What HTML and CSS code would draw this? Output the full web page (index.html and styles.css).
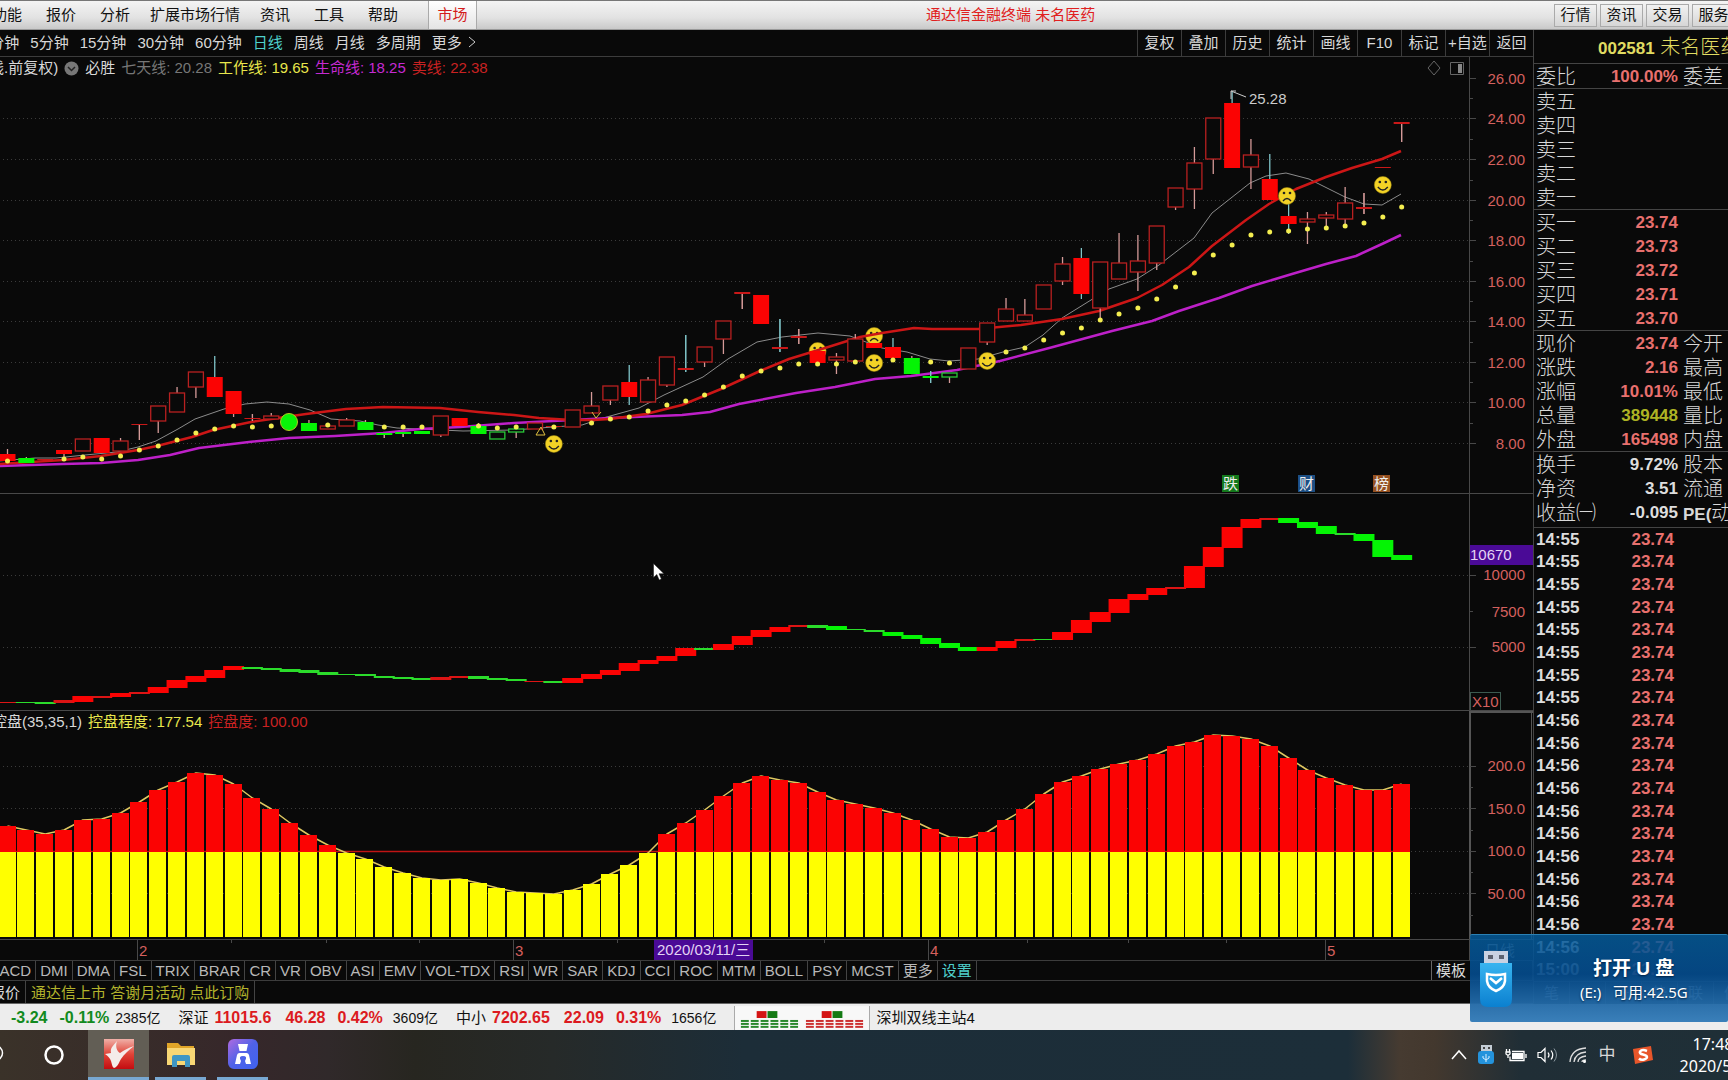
FILE: index.html
```html
<!DOCTYPE html>
<html lang="zh-CN">
<head>
<meta charset="utf-8">
<title>通达信金融终端 未名医药</title>
<meta name="viewport" content="width=device-width, initial-scale=1">
<link rel="stylesheet" href="styles.css">
</head>
<body>
<header class="menubar">
  <nav class="menu">
    <button>功能</button><button>报价</button><button>分析</button><button class="wide">扩展市场行情</button><button>资讯</button><button>工具</button><button>帮助</button>
  </nav>
  <button class="market">市场</button>
  <h1 class="title">通达信金融终端 未名医药</h1>
  <nav class="quick"><button>行情</button><button>资讯</button><button>交易</button><button>服务</button></nav>
</header>

<main class="workspace">
  <section class="analysis">
    <div class="toolbar">
      <nav class="periods">
        <button>1分钟</button><button>5分钟</button><button>15分钟</button><button>30分钟</button><button>60分钟</button><button class="on">日线</button><button>周线</button><button>月线</button><button>多周期</button><button>更多<svg width="8" height="12" viewBox="0 0 8 12"><path d="M1 1l6 5-6 5" fill="none" stroke="#ccc"/></svg></button>
      </nav>
      <nav class="tools">
        <button>复权</button><button>叠加</button><button>历史</button><button>统计</button><button>画线</button><button>F10</button><button>标记</button><button>+自选</button><button>返回</button>
      </nav>
    </div>
    <div class="panels">
      <div class="panel">
        <svg id="price" viewBox="0 57 1534 437" preserveAspectRatio="xMaxYMid slice"></svg>
        <div class="legend first">
          <span>(日线.前复权)</span>
          <svg width="15" height="15" viewBox="0 0 15 15"><circle cx="7.500" cy="7.500" r="7" fill="#777"/><path d="M4 6l3.500 3.500L11 6" fill="none" stroke="#222" stroke-width="1.500"/></svg>
          <span>必胜</span>
          <span class="gray">七天线: 20.28</span><span class="yellow">工作线: 19.65</span><span class="violet">生命线: 18.25</span><span class="red">卖线: 22.38</span>
        </div>
      </div>
      <div class="panel"><svg id="volume" viewBox="0 494 1534 217" preserveAspectRatio="xMaxYMid slice"></svg></div>
      <div class="panel">
        <svg id="control" viewBox="0 711 1534 229" preserveAspectRatio="xMaxYMid slice"></svg>
        <div class="legend third">
          <span>控盘(35,35,1)</span><span class="yellow">控盘程度: 177.54</span><span class="red">控盘度: 100.00</span>
        </div>
      </div>
      <div class="panel"><svg id="dates" viewBox="0 940 1534 20" preserveAspectRatio="xMaxYMid slice"></svg></div>
    </div>
    <nav class="indicators">
      <button>MACD</button><button>DMI</button><button>DMA</button><button>FSL</button><button>TRIX</button><button>BRAR</button><button>CR</button><button>VR</button><button>OBV</button><button>ASI</button><button>EMV</button><button>VOL-TDX</button><button>RSI</button><button>WR</button><button>SAR</button><button>KDJ</button><button>CCI</button><button>ROC</button><button>MTM</button><button>BOLL</button><button>PSY</button><button>MCST</button><button>更多</button><button class="on">设置</button><button class="template">模板</button>
    </nav>
    <div class="news"><button>报价</button><a href="#">通达信上市 答谢月活动 点此订购</a></div>
  </section>

  <aside class="quote">
    <h2><b>002581</b> 未名医药</h2>
    <table><tbody><tr><th>委比</th><td>100.00%</td><th>委差</th></tr></tbody></table>
    <table><tbody>
      <tr><th>卖五</th><td></td><th></th></tr><tr><th>卖四</th><td></td><th></th></tr><tr><th>卖三</th><td></td><th></th></tr><tr><th>卖二</th><td></td><th></th></tr><tr><th>卖一</th><td></td><th></th></tr>
    </tbody></table>
    <table><tbody>
      <tr><th>买一</th><td>23.74</td><th></th></tr><tr><th>买二</th><td>23.73</td><th></th></tr><tr><th>买三</th><td>23.72</td><th></th></tr><tr><th>买四</th><td>23.71</td><th></th></tr><tr><th>买五</th><td>23.70</td><th></th></tr>
    </tbody></table>
    <table><tbody>
      <tr><th>现价</th><td>23.74</td><th>今开</th></tr><tr><th>涨跌</th><td>2.16</td><th>最高</th></tr><tr><th>涨幅</th><td>10.01%</td><th>最低</th></tr><tr><th>总量</th><td class="vol">389448</td><th>量比</th></tr><tr><th>外盘</th><td>165498</td><th>内盘</th></tr>
    </tbody></table>
    <table class="plain"><tbody>
      <tr><th>换手</th><td>9.72%</td><th>股本</th></tr><tr><th>净资</th><td>3.51</td><th>流通</th></tr><tr><th>收益㈠</th><td>-0.095</td><th><b>PE(</b>动)</th></tr>
    </tbody></table>
    <table class="ticks"><tbody id="ticks"></tbody></table>
    <nav class="quote-tabs"><button>笔</button><button>价</button><button>细</button><button>势</button><button>联</button><button>值</button></nav>
  </aside>
</main>

<footer class="status">
  <span class="index"><b class="down">-3.24</b><b class="down">-0.11%</b><span>2385亿</span></span>
  <span class="index"><span class="label">深证</span><b>11015.6</b><b>46.28</b><b>0.42%</b><span>3609亿</span></span>
  <span class="index"><span class="label">中小</span><b>7202.65</b><b>22.09</b><b>0.31%</b><span>1656亿</span></span>
  <svg class="lights" width="136" height="24" viewBox="0 0 136 24" id="lights"></svg>
  <span class="server">深圳双线主站4</span>
</footer>

<div class="taskbar">
  <button class="search" aria-label="搜索"><svg width="18" height="24" viewBox="0 0 18 24"><circle cx="9" cy="10" r="7.500" fill="none" stroke="#fff" stroke-width="1.500"/></svg></button>
  <button class="cortana" aria-label="Cortana"><svg width="22" height="22" viewBox="0 0 22 22"><circle cx="11" cy="11" r="8.500" fill="none" stroke="#fff" stroke-width="2.500"/></svg></button>
  <button class="app active" aria-label="通达信">
    <svg width="30" height="30" viewBox="0 0 30 30"><defs><linearGradient id="tdx" x2="0" y2="1"><stop offset="0" stop-color="#f0b0a8"/><stop offset=".5" stop-color="#e04438"/><stop offset="1" stop-color="#c40c10"/></linearGradient></defs><path fill="url(#tdx)" d="M0 0h30v30H0z"/><path fill="#f4ecea" d="M13 2C9 7 6 9 7 14L1 15c3 2 5 4 6 7 1 3 1 6 3 7 4-1 5-6 7-9 3-5 8-9 13-13-6 2-10 4-14 7-3-2-5-6-3-12z"/></svg>
  </button>
  <button class="app" aria-label="文件资源管理器">
    <svg width="30" height="28" viewBox="0 0 30 28"><path fill="#e0a528" d="M1 3h11l3 3h13v18H1z"/><path fill="#f8d775" d="M1 8h28v17H1z"/><path fill="#3f96c4" d="M6 27V17q0-2 2-2h14q2 0 2 2v10h-5v-6h-8v6z"/></svg>
  </button>
  <button class="app" aria-label="应用">
    <svg width="30" height="30" viewBox="0 0 30 30"><defs><linearGradient id="pur" x1="0" y1="0" x2="1" y2="1"><stop offset="0" stop-color="#b06ae0"/><stop offset=".5" stop-color="#4f62e8"/><stop offset="1" stop-color="#3f63f0"/></linearGradient></defs><rect width="30" height="30" rx="6" fill="url(#pur)"/><path fill="#fff" d="M10 5h10l-1.500 7h-7zM7 25l2-9q.5-2 2.500-2h7q2 0 2.500 2l2 9h-5l-1-3q3-5-2-5t-2 5l-1 3z"/></svg>
  </button>
  <div class="tray">
    <svg width="16" height="12" viewBox="0 0 16 12"><path d="M1 10l7-8 7 8" fill="none" stroke="#fff" stroke-width="1.500"/></svg>
    <svg width="18" height="22" viewBox="0 0 18 22"><path fill="#c4ccd4" d="M4 1h11v7H4z"/><path fill="#444" d="M6 3h2v2H6zm5 0h2v2h-2z"/><rect y="7" x="1" width="16" height="13" rx="3" fill="#2493dc"/><path d="M9 10v8M6 12v2l3 2 3-2v-2" fill="none" stroke="#d8efff"/></svg>
    <svg width="22" height="16" viewBox="0 0 22 16"><path fill="none" stroke="#fff" stroke-width="1.300" d="M7 4.500h12v9H5v-4M21 7v4M1.500 2v3M4.500 2v3M1 5h4v2l-2 1.500L1 7zM3 8v3"/><path fill="#fff" d="M7 6h11v6H7z"/></svg>
    <svg width="22" height="16" viewBox="0 0 22 16"><path fill="none" stroke="#fff" stroke-width="1.200" d="M1 5.500h3l4-4v13l-4-4H1zM11 5.500q2 2.500 0 5M14 3.500q3.500 4.500 0 9"/><path fill="none" stroke="#8a979e" d="M17 1.500q5 6.500 0 13"/></svg>
    <svg width="18" height="18" viewBox="0 0 18 18"><g fill="none" stroke="#ddd" stroke-width="1.300"><path d="M1 16Q2 3 17 2M5 16q1-9 12-10M9 16q0-5 8-6M13 16q0-2 4-2"/></g><circle cx="15.500" cy="15.500" r="1.500" fill="#fff"/></svg>
    <span class="ime">中</span>
    <svg width="22" height="20" viewBox="0 0 22 20"><path fill="#e8562a" d="M1 4l18-3 2 14-18 4z"/><path d="M15 6Q10 4 8 6.500q-1 2 3 3t4 2.500-3 2.500-5-1" fill="none" stroke="#fff" stroke-width="2.500"/></svg>
    <div class="clock"><time>17:48</time><time>2020/5/8</time></div>
  </div>
</div>

<div class="popup" role="status">
  <svg width="34" height="56" viewBox="0 0 34 56"><defs><linearGradient id="usb" x2="0" y2="1"><stop offset="0" stop-color="#38b4f0"/><stop offset="1" stop-color="#0b80d0"/></linearGradient></defs><path fill="#c9d2e2" d="M5 0h24v14H5z"/><path fill="#5c6270" d="M9 4h5v4H9zm11 0h5v4h-5z"/><path fill="url(#usb)" d="M1 12h32v36q0 8-8 8H9q-8 0-8-8z"/><path d="M8 23q9 2 18 0v7q-1 7-9 10-8-3-9-10zM11 27l6 5 6-5" fill="none" stroke="#fff" stroke-width="2.500"/></svg>
  <p><strong>打开 U 盘</strong><span>(E:)&nbsp;&nbsp; 可用:42.5G</span></p>
</div>
<svg class="cursor" width="12" height="18" viewBox="0 0 12 18"><path fill="#fff" stroke="#111" stroke-width=".5" d="M.5.500v14l3.300-3 2.400 5.500 2.200-1-2.400-5.300H11z"/></svg>
<script src="chart.js"></script>
</body>
</html>
```
FILE: styles.css
```css
* { box-sizing: border-box; }
body {
  margin: 0; min-height: 100vh; overflow: hidden; display: flex; flex-direction: column;
  background: #090909; color: #d8d8d8;
  font: 15px/20px "Liberation Sans", "Noto Sans CJK SC", sans-serif;
}
button { background: none; border: 0; padding: 0; color: inherit; font: inherit; white-space: nowrap; flex: none; }
h1, h2, p { margin: 0; font-size: inherit; font-weight: 400; }
svg { flex: none; }

/* Menu bar */
.menubar { flex: none; height: 30px; display: flex; align-items: center; color: #111; overflow: hidden;
  background: linear-gradient(#f4f4f4, #e2e2e2 60%, #c9c9c9); border-top: 1px solid #777; border-bottom: 1px solid #999; }
.menu { display: flex; margin-left: -20px; }
.menu button { padding: 0 12px; }
.menu .wide { padding: 0 8px; }
.market { margin-left: 18px; width: 49px; height: 28px; color: #d41c1c; background: linear-gradient(#fff, #e4e4e4); border: solid #aaa; border-width: 0 1px; }
.title { flex: 1; padding-right: 10px; text-align: center; color: #e02020; }
.quick { display: flex; gap: 3px; margin-right: -7px; }
.quick button { width: 43px; height: 23px; border: 1px solid #aaa; background: linear-gradient(#f2f2f2, #d6d6d6); }

/* Workspace */
.workspace { flex: 1; min-height: 0; display: grid; grid-template-columns: minmax(0, 1fr) 194px; }
.analysis { display: flex; flex-direction: column; min-width: 0; border-right: 1px solid #444; overflow: hidden; }
.toolbar { flex: none; height: 27px; display: flex; justify-content: space-between; border-bottom: 1px solid #3c3c3c; }
.periods { display: flex; gap: 11px; margin-left: -19px; }
.periods svg { margin-left: 6px; }
.on { color: #4fd0cc; }
.tools { display: flex; }
.tools button { width: 44px; border-left: 1px solid #3c3c3c; }
.panels { flex: 1; min-height: 0; display: grid; grid-template-rows: minmax(0, 437fr) minmax(0, 217fr) minmax(0, 229fr) minmax(0, 20fr); }
.panel { display: grid; grid-template: minmax(0, 1fr) / minmax(0, 1fr); min-height: 0; overflow: hidden; }
.panel > * { grid-area: 1 / 1; }
.panel > svg { width: 100%; height: 100%; }
.panel text { font-size: 15px; }
.legend { align-self: start; display: flex; gap: 6px; padding-top: 1px; white-space: nowrap; }
.legend.first { margin-left: -31px; align-items: center; }
.legend.third { margin-left: -8px; }
.gray { color: #777; }
.yellow { color: #e8e64c; }
.violet { color: #c52ad2; }
.red { color: #c92222; }

.indicators { flex: none; height: 21px; display: flex; margin-left: -17px; border: solid #3c3c3c; border-width: 1px 0; color: #b8b8b8; }
.indicators button { padding: 0 4px; border-right: 1px solid #444; line-height: 19px; }
.indicators .template { margin-left: auto; width: 102px; text-align: left; border-left: 1px solid #666; color: #ddd; }
.news { flex: none; height: 23px; display: flex; margin-left: -10px; border-bottom: 1px solid #666; line-height: 24px; }
.news button { padding-right: 5px; border-right: 1px solid #444; }
.news a { padding: 0 5px; border-right: 1px solid #444; color: #b3b32c; text-decoration: none; }

/* Quote panel */
.quote { display: flex; flex-direction: column; min-width: 0; min-height: 0; overflow: hidden; }
.quote h2 { height: 34px; padding-left: 64px; font-size: 20px; line-height: 34px; font-weight: 300; color: #e0dc62; white-space: nowrap; border-bottom: 1px solid #444; }
.quote h2 b { font-size: 17px; font-weight: 700; }
.quote table { flex: none; table-layout: fixed; width: 210px; border-collapse: collapse; border-bottom: 1px solid #444; }
.quote tr { height: 24px; }
.quote th, .quote td { padding: 2px 0 0; line-height: 22px; white-space: nowrap; vertical-align: top; }
.quote th { font-size: 20px; font-weight: 300; text-align: left; padding-left: 2px; }
.quote th:last-child { padding-left: 5px; }
.quote th:first-child { width: 64px; }
.quote td { width: 80px; font-size: 17px; font-weight: 700; text-align: right; color: #e8706e; }
.quote th b { font-size: 17px; font-weight: 700; }
.quote td.vol { color: #aeb324; }
.quote .plain td { color: #ddd; }
.quote .plain tr:last-child { height: 27px; }
.quote .ticks { flex: 1; display: flex; min-height: 0; border: 0; }
.ticks tbody { flex: 1; display: grid; grid-auto-rows: minmax(0, 1fr); }
.quote .ticks tr { height: auto; display: grid; grid-template-columns: 64px 76px; }
.quote .ticks td { width: auto; line-height: 20px; }
.quote .ticks td:first-child { text-align: left; padding-left: 2px; color: #ddd; }
.quote-tabs { flex: none; height: 23px; display: flex; border-top: 1px solid #444; width: 220px; }
.quote-tabs button { width: 36px; border-right: 1px solid #444; }

/* Index strip */
.status { flex: none; height: 26px; display: flex; align-items: center; background: #ededed; color: #111; font-size: 14px; line-height: 24px; white-space: nowrap; padding: 2px 0 0 11px; }
.index { display: flex; align-items: center; margin-right: 18px; }
.index b { font-size: 16px; color: #dc1a20; margin-right: 12px; }
.index b:nth-of-type(1) { margin-right: 14px; }
.index b.down { color: #128a20; }
.index b.down:nth-of-type(1) { margin-right: 12px; }
.index b + span { margin-left: -2px; }
.index .down + span { margin-left: -6px; }
.label { font-size: 15px; margin-right: 6px; }
.lights { border: solid #aaa; border-width: 0 1px; margin-right: 6px; }
.server { font-size: 15px; }

/* Taskbar */
.taskbar { flex: none; height: 50px; display: flex; overflow: hidden;
  background: linear-gradient(90deg, #3a3229, #36272a 14%, #30292a 19%, #272620 24%, #262a29 32%, #1c2d38 43%, #1c2e39 78%, #463b31 81%, #43382e 83%, #202e36 88%, #1f2f37); }
.taskbar button { display: flex; align-items: center; justify-content: center; }
.search { width: 18px; margin-left: -14px; }
.cortana { width: 60px; margin-left: 20px; }
.app { width: 51px; margin-right: 11px; border-bottom: 3px solid #78a8d2; }
.app.active { width: 61px; margin: 0 6px 0 4px; background: #625e55; }
.tray { margin-left: auto; display: flex; align-items: center; gap: 10px; margin-right: -22px; }
.ime { font-size: 17px; width: 20px; margin-right: 5px; text-align: center; }
.clock { width: 74px; margin-left: 12px; display: flex; flex-direction: column; align-items: center; font: 16px/22px "Noto Sans", sans-serif; color: #fff; }

/* Overlays */
.popup { position: absolute; right: 0; bottom: 58px; width: 258px; height: 88px; display: flex; align-items: center; padding-left: 9px;
  background: linear-gradient(rgba(4, 92, 156, .84), rgba(4, 74, 138, .93) 45%, rgba(52, 124, 184, .97)); color: #fff; border-top: 1px solid #2a80b4; border-radius: 2px; }
.popup p { flex: 1; display: flex; flex-direction: column; align-items: flex-start; padding-left: 67px; text-shadow: 0 1px 2px #002244; }
.popup strong { font-size: 19px; line-height: 26px; padding-left: 13px; }
.popup span { font-family: "Noto Sans", "Noto Sans CJK SC", sans-serif; }
.cursor { position: absolute; left: 653px; top: 563px; }
```
FILE: chart.js
```js
const PITCH = 18.84, X0 = 8.5;
const cx = i => X0 + i * PITCH;
const rect = (x, y, w, h, fill, more = '') => `<rect x="${x}" y="${y}" width="${w}" height="${h}" fill="${fill}" ${more}/>`;
const line = (x1, y1, x2, y2, color, more = '') => `<path d="M${x1} ${y1}L${x2} ${y2}" stroke="${color}" fill="none" ${more}/>`;
const grid = y => line(0, y + .5, 1470, y + .5, '#3b3b3b', 'stroke-dasharray="1 3"');
const label = (x, y, t, color = '#d4605e', anchor = 'end') => `<text x="${x}" y="${y}" fill="${color}" text-anchor="${anchor}">${t}</text>`;
const curve = (pts, color, w) => `<polyline points="${pts}" fill="none" stroke="${color}" stroke-width="${w}" stroke-linejoin="round"/>`;
const face = (x, y, sad) => `<g transform="translate(${x} ${y})"><circle r="8.500" fill="#f3d226" stroke="#a08a10" stroke-width=".5"/><circle cx="-3" cy="-3" r="1.300" fill="#222"/><circle cx="3" cy="-3" r="1.300" fill="#222"/><path d="${sad ? 'M-4 5q4-5 8 0' : 'M-5 2q5 6 10 0'}" fill="none" stroke="#222" stroke-width="1.300"/></g>`;
const put = (id, html) => { document.getElementById(id).innerHTML = html; };

/* Candles: index, kind, body top, body bottom, wick top, wick bottom, cyan wick.
   r solid red, h hollow red, g solid green, e hollow green */
const candles = [
[0,'r',454,461,449],[1,'g',458,463,457],[2,'r',459,460],[3,'r',450,454,0,459],[4,'h',439,451],[5,'r',438,453],[6,'h',441,451,438],[7,'r',424,425,0,440],
[8,'h',406,421,0,433],[9,'h',393,412,387],[10,'h',372,387,0,398],[11,'r',377,397,356,0,1],[12,'r',391,414,0,417],[13,'r',418,419,414,421],[14,'h',416,419,413],
[16,'g',423,431,420],[17,'h',426,429],[18,'h',420,426,418],[19,'g',422,430,420],[20,'g',433,435,0,438],[21,'g',432,434,0,437],[22,'g',431,434],
[23,'h',416,435,0,437],[24,'r',418,426],[25,'g',426,434,423],[26,'e',432,439],[27,'e',429,432,0,438],[28,'h',423,429],[29,'r',426,427],[30,'h',410,427],
[31,'h',406,413,392],[32,'h',386,400,0,405],[33,'r',382,397,365,405,1],[34,'h',380,402,377],[35,'h',357,385,0,387],[36,'r',368,370,335,372,1],[37,'h',347,362,0,367],
[38,'h',321,339,0,354],[39,'r',292,294,0,309],[40,'r',295,324],[41,'r',347,349,319,352,1],[42,'r',336,338,329,344],[43,'r',351,363],[44,'h',357,360,353,374],
[45,'h',339,361,334],[46,'r',343,348],[47,'r',347,358,338,0,1],[48,'g',358,374,356],[49,'g',376,378,371,383,1],[50,'e',373,377,0,383],[51,'h',348,369],
[52,'h',323,342,0,345],[53,'h',309,321,298],[54,'h',315,321,299],[55,'h',285,309],[56,'h',264,281,257,285],[57,'r',258,294,248,299,1],[58,'h',262,308,0,320],
[59,'h',263,279,233],[60,'h',261,272,235,291],[61,'h',226,263,0,270],[62,'h',188,207,0,210],[63,'h',163,189,147,209],[64,'h',118,159,0,174],[65,'r',103,168,92,0,1],
[66,'h',155,167,139,189],[67,'r',179,200,154,0,1],[68,'r',216,224,203,234,1],[69,'h',219,222,212,244],[70,'h',215,218,212,227],[71,'h',203,219,187,225],
[72,'r',207,209,193,214],[73,'r',167,168],[74,'r',122,124,0,142]];
const dots = {0:461,3:459,4:457,5:459,6:456,7:450,8:446,9:440,10:433,11:429,12:426,13:427,14:426,17:425,20:427,21:427,22:427,25:426,26:428,27:427,29:427,31:423,32:419,33:417,34:411,35:405,36:401,37:395,38:387,39:376,40:371,41:368,42:364,43:364,44:364,45:362,47:360,49:362,50:363,53:352,54:348,55:340,56:333,57:328,58:320,59:314,60:308,61:299,62:287,63:273,64:255,65:245,66:235,67:232,68:231,69:229,70:228,71:226,72:223,73:217,74:207};
const redLine = '0,464 64,460 102,456 139,450 158,446 193,437 214,430 233,426 252,422 286,417 307,414 347,409 384,407 441,408 479,412 515,415 540,418 573,420 594,420 611,419 647,414 683,405 722,389 761,371 790,359 826,348 861,337 883,333 915,328 933,329 979,329 1022,325 1063,319 1100,311 1138,298 1163,285 1190,267 1213,246 1247,220 1270,204 1297,189 1327,177 1353,168 1383,159 1402,151';
const violetLine = '0,466 64,464 102,463 139,460 171,455 200,448 250,442 290,438 336,436 384,433 421,429 461,427 515,423 554,421 611,418 683,415 711,412 740,404 797,393 836,387 876,379 912,376 958,370 1001,361 1054,347 1113,331 1153,321 1180,311 1220,298 1253,286 1293,274 1327,264 1357,256 1383,244 1402,235';
const grayLine = '0,461 36,458 57,458 86,455 118,452 139,447 157,441 179,429 196,419 225,409 246,404 268,402 290,404 311,410 332,419 361,421 379,425 398,428 464,431 515,430 554,427 583,425 604,418 640,408 665,395 704,377 729,359 758,342 783,337 819,333 851,336 883,348 908,352 931,359 950,361 979,359 1004,352 1026,347 1044,335 1063,318 1092,300 1110,289 1138,279 1160,265 1195,238 1213,213 1251,183 1267,176 1287,173 1310,179 1346,197 1365,204 1383,205 1402,194';

function candle([i, kind, top, bottom, wt, wb, cyan]) {
  const x = cx(i), c = cyan ? '#7fc4c8' : '#d49a98';
  let s = '';
  if (wt) s += line(x, wt, x, top, c, 'stroke-width="1.300"');
  if (wb) s += line(x, bottom, x, wb, c, 'stroke-width="1.300"');
  if (bottom - top < 3) s += line(x, wt || top, x, wb || bottom, c);
  if (kind === 'r' || kind === 'g') return s + rect(x - 8, top, 16, bottom - top, kind === 'r' ? (bottom - top < 3 ? '#c81818' : '#fb0303') : '#04f404');
  return s + rect(x - 7.5, top, 15, bottom - top, '#090909', `stroke="${kind === 'h' ? '#b82020' : '#28c838'}" stroke-width="1.300"`);
}
const axis = (top, bottom) => line(1470.5, top, 1470.5, bottom, '#484848');
const ticks = (ys, len) => ys.map(y => line(1471, y + .5, 1471 + len, y + .5, '#484848')).join('');

const prices = [[26,78],[24,118],[22,159],[20,200],[18,240],[16,281],[14,321],[12,362],[10,402],[8,443]];
let s = prices.slice(1).map(p => grid(p[1])).join('') + axis(57, 494);
s += ticks(prices.map(p => p[1]), 6) + ticks(prices.slice(1).map(p => p[1] - 20), 3);
s += prices.map(([v, y]) => label(1526, y + 6, v.toFixed(2))).join('');
s += curve(grayLine, '#8b8b8b', 1);
s += face(cx(43), 351) + face(cx(46), 336, true);
s += curve(violetLine, '#bd20c8', 2.5) + curve(redLine, '#cc1616', 2.5);
s += candles.map(candle).join('');
s += Object.entries(dots).map(([i, y]) => `<circle cx="${cx(+i)}" cy="${y}" r="2.500" fill="#f4ee50"/>`).join('');
s += `<circle cx="290" cy="422" r="8.500" fill="#08f408" stroke="#b4c820"/>`;
s += '<path d="M542 427l4 8h-9z M593 412l4 6 5-6" fill="none" stroke="#e0c040"/>';
s += face(cx(29), 444) + face(cx(46), 363) + face(cx(52), 361) + face(1288, 196, true) + face(cx(73), 185);
s += '<path d="M1232 99V91l15 6M1232 91l5 0" fill="none" stroke="#ccc"/>' + label(1250, 104, '25.28', '#ccc', 'start');
[[1223, '#147a1c', '跌'], [1299, '#1c4f84', '财'], [1374, '#955020', '榜']].forEach(([x, c, t]) => { s += rect(x, 475, 17, 17, c) + label(x + 1, 489, t, '#eee', 'start'); });
s += '<path d="M1435 61l6 7-6 7-6-7z M1451.500 62.500h13v12h-13z" fill="none" stroke="#666"/>' + rect(1459, 64, 4, 9, '#888');
s += line(0, 493.5, 1534, 493.5, '#484848');
put('price', s);

/* Step blocks: top, bottom per trading day */
const steps = '702-703 702-703 702-704 700-703 696-702 696-698 693-697 692-694 687-693 680-688 676-682 670-678 666-670 667-669 668-670 669-672 670-673 672-675 674-675 674-676 676-678 677-679 678-680 677-680 676-678 676-679 678-680 679-681 681-682 681-683 678-683 674-679 670-675 663-671 660-664 656-661 648-656 648-650 644-650 636-645 630-637 627-632 625-627 625-628 626-630 629-630 630-632 632-636 635-639 638-644 643-648 647-651 647-651 641-648 639-641 639-640 632-640 620-633 612-622 599-613 594-600 588-595 587-589 566-588 547-567 527-548 519-528 518-520 518-523 522-528 526-534 533-535 534-541 540-557 555-560'.split(' ').map(v => v.split('-').map(Number));
const green = i => (i > 0 && i < 3) || (i > 12 && i < 23) || (i > 24 && i < 28) || i === 29 || i === 37 || (i > 42 && i < 52) || i === 55 || i > 67;
s = grid(575) + grid(647) + axis(494, 711) + ticks([575, 647], 6) + ticks([611], 3);
s += steps.map(([a, b], i) => rect(cx(i) - 10.5, a, 21, b - a, green(i) ? (b - a < 4 ? '#2bdc2b' : '#04f404') : (b - a < 4 ? '#dc1414' : '#fb0303'))).join('');
s += rect(1471, 545, 63, 20, '#4a0a96') + label(1471, 560, '10670', '#e4d4f4', 'start');
s += label(1526, 580, '10000') + label(1526, 617, '7500') + label(1526, 652, '5000');
s += rect(1471.5, 692.5, 30, 18, 'none', 'stroke="#3c5a50"') + label(1473, 707, 'X10', '#d4605e', 'start');
s += line(0, 710.5, 1534, 710.5, '#484848');
put('volume', s);

const tops = [826,830,834,830,820,819,813,802,790,782,773,775,784,798,809,823,835,845,853,859,867,873,878,880,879,883,888,892,893,894,890,884,874,865,853,834,823,810,796,783,776,780,783,792,800,804,808,813,820,829,837,838,832,820,809,794,782,776,769,764,760,754,746,742,735,736,739,746,758,770,778,785,790,790,784];
s = grid(766) + grid(808) + grid(851) + grid(893) + line(0, 851.5, 1402, 851.5, '#c01414', 'stroke-width="1.500"');
s += curve(tops.map((t, i) => `${cx(i)},${t}`).join(' '), '#e0c860', 1.5);
s += tops.map((t, i) => rect(Math.round(cx(i) - 9), Math.max(t, 852), 17, 937 - Math.max(t, 852), '#ffff00') + (t < 852 ? rect(Math.round(cx(i) - 9), t, 17, 852 - t, '#fb0303') : '')).join('');
s += line(1471, 711, 1471, 940, '#555', 'stroke-width="2"') + line(1471, 712, 1534, 712, '#555', 'stroke-width="2"') + line(1532.5, 711, 1532.5, 940, '#555');
s += ticks([766, 808, 851, 893], 6) + ticks([787, 830, 872, 915], 3);
s += label(1526, 771, '200.0') + label(1526, 814, '150.0') + label(1526, 856, '100.0') + label(1526, 899, '50.00');
s += line(0, 939.5, 1534, 939.5, '#484848');
put('control', s);

s = [[138, 2], [514, 3], [929, 4], [1326, 5]].map(([x, t]) => line(x + .5, 940, x + .5, 960, '#484848') + label(x + 2, 956, t, '#d4605e', 'start')).join('');
s += [232, 327, 420, 618, 825, 1028, 1129, 1227].map(x => line(x + .5, 940, x + .5, 943, '#484848')).join('');
s += rect(655, 940, 99, 20, '#4a0a96') + label(658, 955, '2020/03/11/三', '#e4d4f4', 'start') + axis(940, 960) + label(1486, 956, '日线', '#888', 'start');
put('dates', s);

const lamp = (x, c) => rect(x + 16, 5, 10, 7, '#d41414') + rect(x + 27, 5, 10, 7, '#147a14') + [0, 1, 2, 3, 4, 5].map(k => [14, 17, 20].map(y => rect(x + k * 10, y, 8, 2, c)).join('')).join('');
put('lights', rect(0, 0, 136, 24, '#f8f8f8') + lamp(6, '#28882c') + lamp(72, '#cc3030'));

const times = [...Array(8).fill('14:55'), ...Array(11).fill('14:56'), '15:00'];
put('ticks', times.map(t => `<tr><td>${t}</td><td>23.74</td></tr>`).join(''));
```
